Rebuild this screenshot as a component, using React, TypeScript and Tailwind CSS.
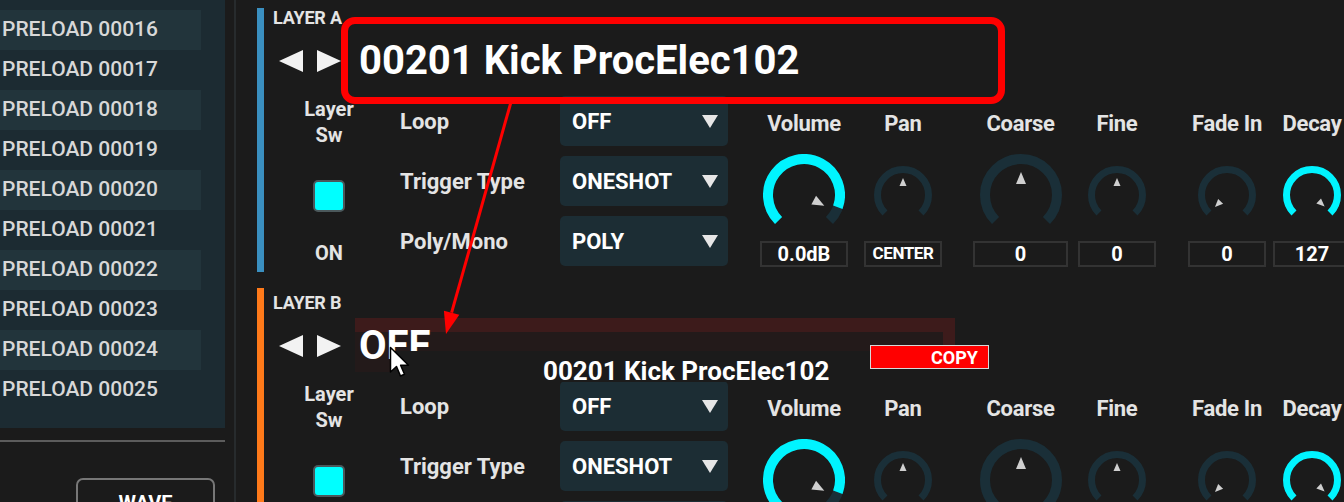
import React from "react";

const presets = Array.from({ length: 10 }, (_, i) => `PRELOAD ${String(16 + i).padStart(5, "0")}`);

type KnobSpec = {
  label: string;
  value: string;
  width: string;
  gap: string;
  big: boolean;
  fillTo: number | null;
  pointer: number;
  narrow?: boolean;
};

const knobs: KnobSpec[] = [
  { label: "Volume", value: "0.0dB", width: "w-[88px]", gap: "ml-0", big: true, fillTo: 110, pointer: 118 },
  { label: "Pan", value: "CENTER", width: "w-[78px]", gap: "ml-[16px]", big: false, fillTo: null, pointer: 0, narrow: true },
  { label: "Coarse", value: "0", width: "w-[95px]", gap: "ml-[31px]", big: true, fillTo: null, pointer: 0 },
  { label: "Fine", value: "0", width: "w-[78px]", gap: "ml-[10px]", big: false, fillTo: null, pointer: 0 },
  { label: "Fade In", value: "0", width: "w-[78px]", gap: "ml-[32px]", big: false, fillTo: null, pointer: -135 },
  { label: "Decay", value: "127", width: "w-[78px]", gap: "ml-[7px]", big: false, fillTo: 135, pointer: 132 },
];

const params = [
  { label: "Loop", value: "OFF" },
  { label: "Trigger Type", value: "ONESHOT" },
  { label: "Poly/Mono", value: "POLY" },
];

function polar(c: number, r: number, deg: number): [number, number] {
  const a = (deg * Math.PI) / 180;
  return [c + r * Math.sin(a), c - r * Math.cos(a)];
}

function arcPath(c: number, r: number, a1: number, a2: number) {
  const [x1, y1] = polar(c, r, a1);
  const [x2, y2] = polar(c, r, a2);
  const large = a2 - a1 > 180 ? 1 : 0;
  return `M ${x1} ${y1} A ${r} ${r} 0 ${large} 1 ${x2} ${y2}`;
}

function Knob({ big, fillTo, pointer }: { big: boolean; fillTo: number | null; pointer: number }) {
  const size = big ? 82 : 58;
  const sw = big ? 10 : 7;
  const c = size / 2;
  const r = c - sw / 2;
  const d = big ? 16 : 12;
  const tip = polar(c, d + (big ? 7 : 5), pointer);
  const [bx, by] = polar(c, d - (big ? 5 : 3), pointer);
  const a = (pointer * Math.PI) / 180;
  const hw = big ? 5 : 3.5;
  const px = Math.cos(a) * hw;
  const py = Math.sin(a) * hw;
  return (
    <svg width={size} height={size} viewBox={`0 0 ${size} ${size}`}>
      <path d={arcPath(c, r, -135, 135)} fill="none" stroke="#1a2f38" strokeWidth={sw} />
      {fillTo !== null && (
        <path d={arcPath(c, r, -135, fillTo)} fill="none" stroke="#00f4ff" strokeWidth={sw} />
      )}
      <polygon
        points={`${tip[0]},${tip[1]} ${bx + px},${by + py} ${bx - px},${by - py}`}
        fill="#cfcfcf"
      />
    </svg>
  );
}

function LayerSection({
  label,
  color,
  name,
  className,
  padTop,
}: {
  label: string;
  color: string;
  name: string;
  className: string;
  padTop: string;
}) {
  return (
    <section className={`flex shrink-0 ${className}`}>
      <div className={`w-[7px] shrink-0 ${color}`} />
      <div className={`flex flex-col pl-[9px] ${padTop}`}>
        <div className="h-[20px] text-[18px] font-bold leading-[20px] tracking-[-0.2px] text-[#e4e4e4]">{label}</div>
        <div className="mt-[12px] flex h-[42px] items-center">
          <svg width="24" height="22" viewBox="0 0 24 22" className="ml-[6px]">
            <polygon points="24,0 24,22 0,11" fill="#f2f2f2" />
          </svg>
          <svg width="24" height="22" viewBox="0 0 24 22" className="ml-[14px]">
            <polygon points="0,0 0,22 24,11" fill="#f2f2f2" />
          </svg>
          <span className="relative z-10 ml-[18px] text-[40px] font-bold leading-[42px] text-white">{name}</span>
        </div>
        <div className="mt-[14px] flex">
          <div className="ml-[30px] flex w-[52px] flex-col items-center text-[20px] font-bold leading-[26px] text-[#e4e4e4]">
            <span>Layer</span>
            <span>Sw</span>
            <div className="mt-[32px] h-[32px] w-[32px] rounded-[5px] border-2 border-[#4b585b] bg-[#00ffff]" />
            <span className="mt-[28px]">ON</span>
          </div>
          <div className="ml-[45px] flex flex-col gap-[10px]">
            {params.map((p) => (
              <div key={p.label} className="flex h-[50px] items-center">
                <span className="w-[160px] text-[22px] font-bold text-[#e4e4e4]">{p.label}</span>
                <div className="flex h-[50px] w-[168px] items-center justify-between rounded-[5px] bg-[#1c2d34] pl-[12px] pr-[10px]">
                  <span className="text-[22px] font-bold text-white">{p.value}</span>
                  <svg width="16" height="13" viewBox="0 0 16 13">
                    <polygon points="0,0 16,0 8,13" fill="#e6e6e6" />
                  </svg>
                </div>
              </div>
            ))}
          </div>
          <div className="ml-[32px] flex">
            {knobs.map((k) => (
              <div key={k.label} className={`flex shrink-0 flex-col items-center ${k.width} ${k.gap}`}>
                <span className="mt-[16px] h-[24px] whitespace-nowrap text-[22px] font-bold leading-[24px] tracking-[-0.3px] text-[#e4e4e4]">
                  {k.label}
                </span>
                <div className="mt-[15px] flex h-[88px] items-center justify-center">
                  <Knob big={k.big} fillTo={k.fillTo} pointer={k.pointer} />
                </div>
                <div
                  className={`mt-[2px] flex h-[26px] w-full items-center justify-center border-2 border-[#333] font-bold text-white ${
                    k.narrow ? "text-[17px] tracking-tight" : "text-[20px]"
                  }`}
                >
                  {k.value}
                </div>
              </div>
            ))}
          </div>
        </div>
      </div>
    </section>
  );
}

export default function App() {
  return (
    <div className="relative flex h-[502px] w-[1344px] overflow-hidden bg-[#1b1b1b] font-['Roboto','Liberation_Sans',sans-serif]">
      <aside className="flex w-[225px] shrink-0 flex-col">
        <div className="h-[428px] shrink-0 bg-[#1c2b32] pt-[10px]">
          {presets.map((p, i) => (
            <div
              key={p}
              className={`flex h-[40px] w-[201px] items-center pl-[2px] text-[21px] font-medium text-[#d8d8d8] ${
                i % 2 === 0 ? "bg-[#22343b]" : ""
              }`}
            >
              {p}
            </div>
          ))}
        </div>
        <div className="mt-[12px] h-[2px] shrink-0 bg-[#5c5c5c]" />
        <div className="ml-[76px] mt-[36px] flex h-[44px] w-[139px] shrink-0 justify-center rounded-[7px] border-2 border-[#777] pt-[8px] text-[20px] font-bold text-white">
          WAVE
        </div>
      </aside>
      <div className="ml-[9px] w-[2px] shrink-0 bg-[#272b2d]" />
      <main className="ml-[21px] flex flex-1 flex-col gap-[16px] pt-[8px]">
        <LayerSection label="LAYER A" color="bg-[#3a8fc0]" name="00201 Kick ProcElec102" className="h-[264px]" padTop="pt-0" />
        <LayerSection label="LAYER B" color="bg-[#ff7a1a]" name="OFF" className="h-[300px]" padTop="pt-[5px]" />
      </main>

      {/* callout box */}
      <div className="absolute left-[341px] top-[17px] z-30 h-[87px] w-[664px] rounded-[14px] border-[7px] border-[#ff0000]" />

      {/* drop highlight */}
      <div className="absolute left-[355px] top-[318px] h-[54px] w-[600px] border-r-[12px] border-t-[14px] border-[#3d1b1b] bg-[#231a1a]" />

      {/* drag ghost */}
      <div className="absolute left-[392px] top-[351px] z-20 h-[31px] w-[608px] bg-[#1b1b1b]">
        <span className="absolute left-[151px] top-[7px] whitespace-nowrap text-[26px] font-bold leading-[26px] text-white">
          00201 Kick ProcElec102
        </span>
      </div>
      <div className="absolute left-[870px] top-[345px] z-30 flex h-[24px] w-[119px] items-center justify-end border border-[#d8d8d8] bg-[#ff0000] pr-[10px] text-[18px] font-bold text-white">
        COPY
      </div>

      <svg className="pointer-events-none absolute left-0 top-0 z-40" width="1344" height="502">
        <line x1="511" y1="102" x2="451.6" y2="312.7" stroke="#ff0000" strokeWidth="3" />
        <polygon points="446,334 459.3,314.7 443.9,310.7" fill="#ff0000" />
      </svg>

      <svg className="absolute left-[389px] top-[346px] z-40" width="22" height="34" viewBox="0 0 22 34">
        <path d="M1.5 1.5 L1.5 26 L7.5 20.5 L11.5 30 L15.5 28.3 L11.6 19.2 L19.5 19.2 Z" fill="#ffffff" stroke="#000000" strokeWidth="1.5" strokeLinejoin="round" />
      </svg>
    </div>
  );
}
